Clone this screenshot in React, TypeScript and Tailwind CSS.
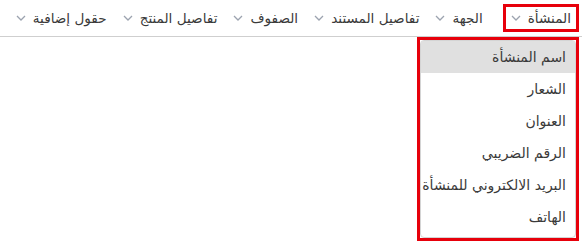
import React from "react";

const tabs = ["المنشأة", "الجهة", "تفاصيل المستند", "الصفوف", "تفاصيل المنتج", "حقول إضافية"];
const items = ["اسم المنشأة", "الشعار", "العنوان", "الرقم الضريبي", "البريد الالكتروني للمنشأة", "الهاتف"];

function Chevron() {
  return (
    <svg width="10" height="6" viewBox="0 0 10 6" fill="none" stroke="#9ca3af" strokeWidth="1.3" className="shrink-0">
      <path d="M1 1l4 4 4-4" />
    </svg>
  );
}

export default function App() {
  return (
    <div dir="rtl" className="w-[582px] h-[241px] bg-white text-[#3a3a3a] text-[14px]" style={{ fontFamily: '"DejaVu Sans", sans-serif' }}>
      <div className="flex h-[37px] items-center border-b border-[#cfcfcf] pr-[3px] overflow-hidden text-[13.6px]">
        {tabs.map((t, i) => (
          <div
            key={t}
            className={
              "flex shrink-0 whitespace-nowrap items-center gap-[7px] h-[28px] " +
              (i === 0 ? "border-[3px] border-red-600 ml-[12px] px-[5px]" : "px-[8px]")
            }
          >
            <span>{t}</span>
            <Chevron />
          </div>
        ))}
      </div>
      <div className="flex">
        <div className="mr-[3px] w-[162px] border-[3px] border-red-600">
          <div className="border border-[#d4d4d4] rounded-sm">
            {items.map((it, i) => (
              <div
                key={it}
                className={"h-[32px] whitespace-nowrap flex items-center pr-[9px] " + (i === 0 ? "bg-[#e0e0e0]" : "")}
              >
                {it}
              </div>
            ))}
            <div className="h-[4px]" />
          </div>
        </div>
      </div>
    </div>
  );
}
